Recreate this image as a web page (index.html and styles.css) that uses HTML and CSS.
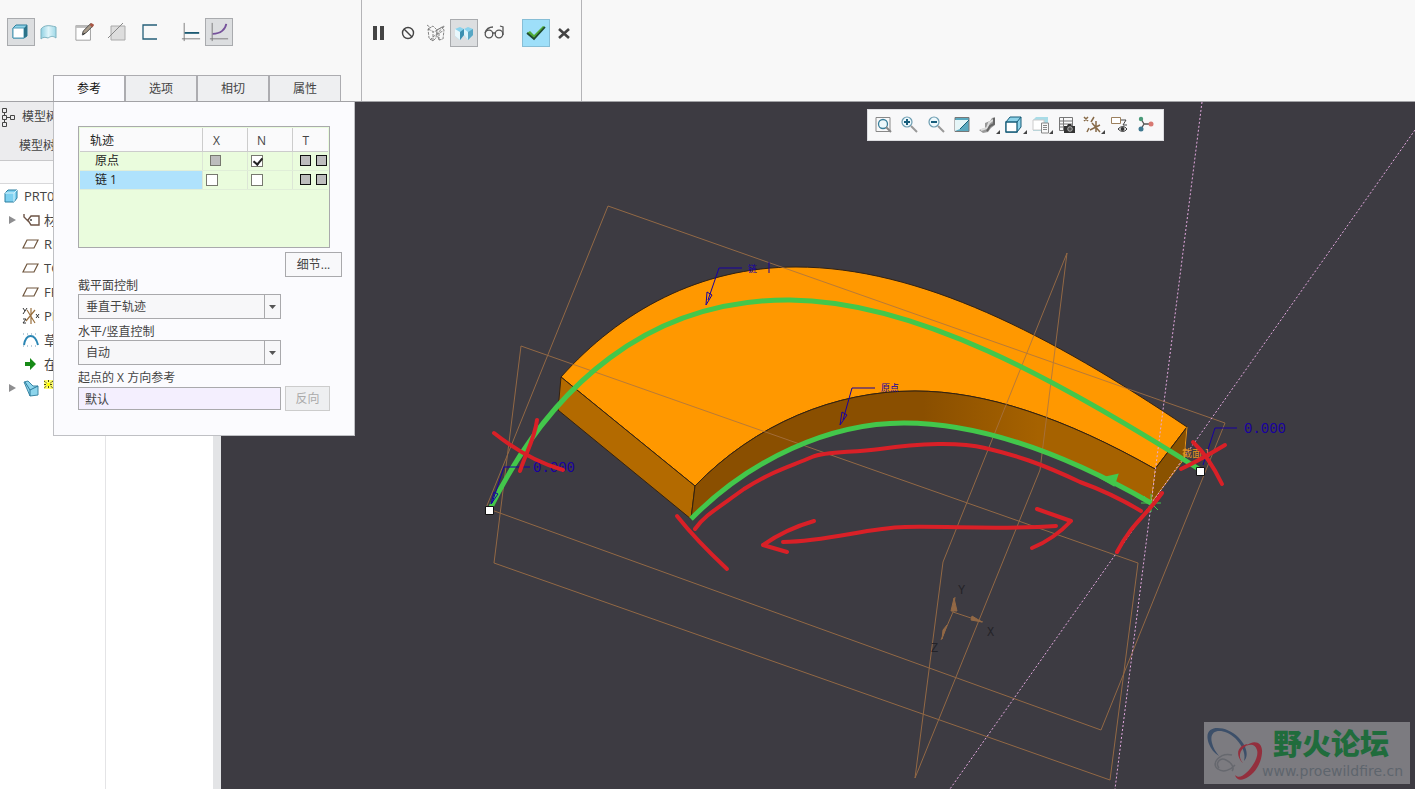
FILE: index.html
```html
<!DOCTYPE html>
<html lang="zh-CN">
<head>
<meta charset="utf-8">
<title>扫描</title>
<link rel="stylesheet" href="styles.css">
</head>
<body>
<header class="ribbon">
  <section class="ribbon-group ribbon-main">
    <div class="tools">
      <div class="tool-set">
        <button class="tool pressed" aria-label="实体"><svg viewBox="0 0 20 20"><path d="M2 6l3-3h11v11l-3 2H2z" fill="#8fd3e8" stroke="#2c7f9c"/><path d="M2 6h11v10H2z" fill="#fff" stroke="#4f9cb8"/><path d="M13 6l3-3v11l-3 2z" fill="#2c7389"/></svg></button>
        <button class="tool" aria-label="曲面"><svg viewBox="0 0 20 20"><defs><linearGradient id="sheet" x1="0" x2="1"><stop offset="0" stop-color="#8fd0e2"/><stop offset=".5" stop-color="#dff5fa"/><stop offset="1" stop-color="#9fd8e7"/></linearGradient></defs><path d="M2 7c3-4 8-4 15-2v11c-4-3-6-1-8 0-3-1-5-1-7 1z" fill="url(#sheet)" stroke="#7fb3c0"/></svg></button>
      </div>
      <div class="tool-set spaced">
        <button class="tool" aria-label="草绘"><svg viewBox="0 0 22 22"><path d="M1 4h16v16H1z" fill="#fff" stroke="#999"/><path d="M1 5h16" stroke="#bbb" stroke-width="3"/><path d="M8 14l1-4 8-8 3 2-8 8z" fill="#a99c8b" stroke="#444"/><path d="M16 3l2-2 3 2-2 3z" fill="#a85543"/><path d="M8 15l2-3 1 1z" fill="#222"/></svg></button>
        <button class="tool" aria-label="移除材料"><svg viewBox="0 0 20 20"><path d="M4 4h14v14H4z" fill="#ddd" stroke="#aaa"/><path d="M1 16L16 1" stroke="#888"/></svg></button>
        <button class="tool" aria-label="薄板"><svg viewBox="0 0 20 20"><path d="M18 3H4v14h14" fill="none" stroke="#245f78" stroke-width="1.3"/></svg></button>
      </div>
      <div class="tool-set apart">
        <button class="tool" aria-label="恒定截面"><svg viewBox="0 0 22 22"><path d="M3.500 1v20M1 18.500h20" stroke="#777"/><path d="M4 12h16" stroke="#1c5a72" stroke-width="2"/></svg></button>
        <button class="tool pressed" aria-label="可变截面"><svg viewBox="0 0 22 22"><path d="M3.500 1v20M1 18.500h20" stroke="#777"/><path d="M4 13c9 0 14-5 15-11" fill="none" stroke="#76529b" stroke-width="2"/></svg></button>
      </div>
    </div>
    <nav class="tabs">
      <button class="tab active">参考</button>
      <button class="tab">选项</button>
      <button class="tab">相切</button>
      <button class="tab">属性</button>
    </nav>
  </section>
  <section class="ribbon-group ribbon-confirm">
    <div class="tools">
      <div class="tool-set loose">
        <button class="tool" aria-label="暂停"><svg viewBox="0 0 20 20"><path d="M5 3h4v14H5zM12 3h4v14h-4z" fill="#444"/></svg></button>
        <div class="tool-set">
          <button class="tool" aria-label="无预览"><svg viewBox="0 0 20 20"><circle cx="10" cy="10" r="5.5" fill="none" stroke="#444" stroke-width="1.4"/><path d="M6 6l8 8" stroke="#444" stroke-width="1.4"/></svg></button>
          <button class="tool" aria-label="分离"><svg viewBox="0 0 20 20"><path d="M2 6l5-3 4 4-1 8-3 3-4-3zM2 6l6 3 10-6M7 18V9M11 7l5-3 2 3-1 9-4 1-2-6 6-3M1 2l4 3M4 17l15-14M13 17V9" fill="none" stroke="#555" stroke-width=".7" stroke-dasharray="3 1"/></svg></button>
          <button class="tool pressed" aria-label="附加预览"><svg viewBox="0 0 20 20"><path d="M1 6l5-2 4 2v6l-4 5-5-4z" fill="#8bd2ec"/><path d="M1 6l5 3v8l-5-4z" fill="#e8f7fc"/><path d="M6 9l4-3v6l-4 5z" fill="#3b8fb0"/><path d="M10 6l4-2 5 2v6l-5 5-4-5z" fill="#8bd2ec"/><path d="M10 6l4 3v8l-4-5z" fill="#dbf3fb"/><path d="M14 9l5-3v6l-5 5z" fill="#58a7c4"/></svg></button>
        </div>
        <button class="tool" aria-label="验证"><svg viewBox="0 0 20 20"><circle cx="5" cy="11" r="3.800" fill="none" stroke="#555" stroke-width="1.300"/><circle cx="15" cy="11" r="3.800" fill="none" stroke="#555" stroke-width="1.300"/><path d="M1 10c1-3 4-6 8-6M8 10h4M19 12V4l-3-1" fill="none" stroke="#555" stroke-width="1.300"/></svg></button>
      </div>
      <div class="tool-set apart">
        <button class="tool accept" aria-label="确定"><svg viewBox="0 0 20 20"><path d="M1 10l3-2 4 4L17 3l2 1L8 16z" fill="#4fab36"/><path d="M1 10l7 6L19 4" fill="none" stroke="#1f4a30" stroke-width="1.800"/></svg></button>
        <button class="tool" aria-label="取消"><svg viewBox="0 0 20 20"><path d="M5 6l10 9M15 6L5 15" stroke="#444" stroke-width="2.600"/></svg></button>
      </div>
    </div>
  </section>
</header>

<main class="workspace">
  <aside class="sidebar">
    <div class="tree-head">
      <div class="tree-title"><svg class="tree-logo" viewBox="0 0 16 20"><path d="M2.500 1.500h4v4h-4zM2.500 8.500h4v4h-4zM2.500 15.500h4v4h-4zM10.500 8.500h4v4h-4zM4.500 5.500v3M4.500 12.500v3M6.500 10.500h4" fill="none" stroke="#444"/></svg>模型树</div>
      <div class="tree-tab">模型树</div>
    </div>
    <div class="tree-filter"></div>
    <ul class="tree">
      <li class="root"><svg viewBox="0 0 18 18"><path d="M3 6l3-3h9v8l-3 4H3z" fill="#7dd0f0" stroke="#2d7ea0"/><path d="M3 6h9v9M12 6l3-3" fill="none" stroke="#d8f3fc"/></svg>PRT0001.PRT</li>
      <li><i class="twist"></i><svg viewBox="0 0 18 18"><path d="M6 9l3-4h8v9H9zM2 3v3l5 5" fill="none" stroke="#6d5446" stroke-width="1.400"/><circle cx="9" cy="9" r="1" fill="#444"/></svg>材料</li>
      <li><svg viewBox="0 0 18 18"><path d="M5 5h11l-4 8H1z" fill="none" stroke="#70573f" stroke-width="1.200"/></svg>RIGHT</li>
      <li><svg viewBox="0 0 18 18"><path d="M5 5h11l-4 8H1z" fill="none" stroke="#70573f" stroke-width="1.200"/></svg>TOP</li>
      <li><svg viewBox="0 0 18 18"><path d="M5 5h11l-4 8H1z" fill="none" stroke="#70573f" stroke-width="1.200"/></svg>FRONT</li>
      <li><svg viewBox="0 0 18 18"><path d="M9 1v16M4 14L13 3M5 3l8 13" stroke="#9a713f" stroke-width="1.200"/><path d="M1 1l2 3 2-3M3 4l-2 3M1 12h3l-3 4h3M14 7l3 4M17 7l-3 4" fill="none" stroke="#333"/></svg>PRT_CSYS_DEF</li>
      <li><svg viewBox="0 0 18 18"><path d="M2 14C4 2 13 2 16 14" fill="none" stroke="#2b86b4" stroke-width="2"/><path d="M1 3h16M1 15h16" stroke="#7b9cb4" stroke-dasharray="1 3"/></svg>草绘 1</li>
      <li><svg viewBox="0 0 18 18"><path d="M3 7h5V3l6 6-6 6v-4H3z" fill="#178a17"/></svg>在此插入</li>
      <li><i class="twist"></i><svg viewBox="0 0 18 18"><path d="M2 3l4-1 5 5 5 0v9l-8 1-3-7z" fill="#8dd5ec" stroke="#3b87a5"/><path d="M3 3l5 8 8-4M8 11v6" fill="none" stroke="#2b789a"/></svg><svg class="spark" viewBox="0 0 9 9"><path d="M0 1l9 7M9 1L0 8M4.500 0v9M0 4.500h9" stroke="#4d4810" stroke-dasharray="2 1"/><path d="M3 3h3v3H3z" fill="#ff0"/></svg></li>
    </ul>
  </aside>

  <section class="viewport">
    <svg class="scene" viewBox="221 102 1194 687" preserveAspectRatio="xMinYMin slice">
      <defs>
        <linearGradient id="wall" x1="0" x2="1" y1="0" y2="0"><stop offset="0" stop-color="#8a4f00"/><stop offset=".5" stop-color="#8a4f00"/><stop offset=".75" stop-color="#a66200"/><stop offset="1" stop-color="#a66200"/></linearGradient>
      </defs>
      <g class="solid-edges">
        <path d="M561 377C620 311 700 267 796 267C920 267 1050 335 1187 427L1155 469C1065 418 985 391 915 391C835 391 755 424 695 486Z" fill="#ff9800"/>
        <path d="M561 377L695 486L691 519L558 410Z" fill="#b36a00"/>
        <path d="M695 486C755 424 835 391 915 391C985 391 1065 418 1155 469L1151 503C1060 451 975 423 904 423C830 423 750 459 691 519Z" fill="url(#wall)"/>
        <path d="M1187 427L1155 469L1151 503L1184 459Z" fill="#8a5200"/>
      </g>
      <path d="M1155 469L1151 503L1184 459L1187 427" class="section-edge"/>
      <g class="datum">
        <path d="M608 206L1225 423L1101 730L486 508Z"/>
        <path d="M521 346L1138 563L1110 780L494 563Z"/>
        <path d="M1067 253L943 562L915 778L1040 470Z"/>
        <path d="M953 612L955 597M953 612L983 622M953 612L941 640"/>
        <path d="M951 611l3-13 3 13zM972 616l-1 4 11 2zM943 630l4-5-5 14z" fill="#a87446"/>
      </g>
      <path class="axis" d="M1202 102L1115 789M1415 130L950 789"/>
      <g class="track">
        <path d="M489 511C550 385 650 299 790 300C915 301 1055 378 1202 471"/>
        <path d="M691 519C750 459 830 423 904 423C975 423 1060 451 1151 503"/>
        <path d="M1106 479l9-2-2 6z" />
        <path d="M1141 503h20M1151 494v18M1144 496l14 14" class="thin"/>
      </g>
      <g class="note">
        <path d="M742 268H719L708 300M706 305l1-13 5 3zM875 388H852L843 420M840 425l2-13 5 3zM530 467H504L492 503M491 504l3-12 4 2zM1237 428H1215L1203 465"/>
        <text x="748" y="272" class="small">链</text><path d="M769 262v11"/>
        <text x="881" y="391" class="small">原点</text>
        <text x="533" y="472">0.000</text>
        <text x="1244" y="433">0.000</text>
      </g>
      <text x="1182" y="457" class="section-name">截面 1</text>
      <g class="csys"><text x="958" y="594">Y</text><text x="987" y="636">X</text><text x="931" y="652">Z</text></g>
      <g class="ends"><path d="M485.500 506.500h8v8h-8zM1196.500 467.500h8v8h-8z"/></g>
      <g class="marker">
        <path d="M494 433Q528 460 563 470M537 420C535 438 525 455 520 471"/>
        <path d="M677 516Q696 540 727 569"/>
        <path d="M695 529C704 516 715 510 744 489C775 470 786 468 812 457C826 451 850 453 880 449C920 443 960 442 985 448C1015 455 1040 463 1080 482C1105 491 1121 499 1141 511"/>
        <path d="M814 521Q786 529 763 545L787 552M783 542C830 541 866 528 905 527C950 526 1000 530 1056 526M1037 509L1071 521Q1054 539 1032 548"/>
        <path d="M1162 493C1145 517 1132 523 1117 552"/>
        <path d="M1181 469Q1200 460 1225 445M1193 442Q1209 457 1222 484"/>
      </g>
    </svg>

    <div class="view-bar">
      <button aria-label="重新调整"><svg viewBox="0 0 20 20"><path d="M3 2.500h14v14H3z" fill="none" stroke="#888"/><circle cx="10" cy="9" r="4.500" fill="#edf8fc" stroke="#397e9a" stroke-width="1.300"/><path d="M13 12l5 5" stroke="#888" stroke-width="2"/></svg></button>
      <button aria-label="放大"><svg viewBox="0 0 20 20"><circle cx="8" cy="7" r="5" fill="#edf8fc" stroke="#6d9db1" stroke-width="1.200"/><path d="M12 11l6 6" stroke="#999" stroke-width="2"/><path d="M8 4v6M5 7h6" stroke="#175d7c" stroke-width="2"/></svg></button>
      <button aria-label="缩小"><svg viewBox="0 0 20 20"><circle cx="8" cy="7" r="5" fill="#edf8fc" stroke="#6d9db1" stroke-width="1.200"/><path d="M12 11l6 6" stroke="#999" stroke-width="2"/><path d="M5 7h6" stroke="#175d7c" stroke-width="2"/></svg></button>
      <button aria-label="重画"><svg viewBox="0 0 20 20"><path d="M3 2.500h14v14H3z" fill="#5aa9bf" stroke="#777"/><path d="M3 5h14L8 14l-5 2z" fill="#e5f5f7"/><path d="M17 5L8 14" stroke="#176078"/></svg></button>
      <button class="more" aria-label="渲染"><svg viewBox="0 0 20 20"><path d="M1 15l6-2 0-5 5-2 2-3 3-1v8l-4 3-3 4-5 1z" fill="#999"/><path d="M3 15l6-2 2-5 4-3" fill="none" stroke="#ddd" stroke-width="2"/><path d="M9 16l3-5 4-2V3" fill="none" stroke="#666" stroke-width="2"/></svg></button>
      <button class="more" aria-label="显示样式"><svg viewBox="0 0 20 20"><path d="M2 7l4-5h11v10l-4 5H2z" fill="#8ed2e8" stroke="#175d79"/><path d="M2 7h11v10H2z" fill="#fff" stroke="#175d79" stroke-width="1.300"/><path d="M13 7l4-5" stroke="#175d79"/></svg></button>
      <button class="more" aria-label="已保存方向"><svg viewBox="0 0 20 20"><path d="M2 5l3-3h12v10l-4 4H2z" fill="#a9dce7"/><path d="M2 5h11v10H2z" fill="#fff" stroke="#ccc"/><path d="M10.500 8h7v10h-7z" fill="#f8f8f8" stroke="#888"/><path d="M12 10.500h4M12 12.500h4M12 14.500h4" stroke="#888"/></svg></button>
      <button aria-label="视图管理器"><svg viewBox="0 0 20 20"><path d="M2.500 2.500h13v13h-13zM2.500 6h13M2.500 9h13M2.500 12h13M6.500 2.500v13" fill="none" stroke="#777"/><path d="M7 11h3l1-2h3l1 2h3v7H7z" fill="#333"/><circle cx="13" cy="14" r="2.300" fill="#555" stroke="#ddd" stroke-width=".7"/></svg></button>
      <button class="more" aria-label="基准显示"><svg viewBox="0 0 20 20"><path d="M1 2l4 4M5 2L1 6M4 17l2-4M8 7l3-5M13 6v11M7 15l10-5M9 8l8 9" fill="none" stroke="#876a48" stroke-width="1.500"/></svg></button>
      <button aria-label="注释显示"><svg viewBox="0 0 20 20"><path d="M1.500 2.500h9v6h-9z" fill="#fff" stroke="#9c805e"/><path d="M11 5h5l-3 5h4" fill="none" stroke="#444"/><path d="M8 14q5-5 9 0-4 5-9 0z" fill="#fff" stroke="#333"/><circle cx="12.500" cy="14" r="2" fill="#333"/></svg></button>
      <button aria-label="旋转中心"><svg viewBox="0 0 20 20"><path d="M5 4l3 5-3 5M8 9h8" fill="none" stroke="#555" stroke-width="1.300"/><circle cx="5" cy="4" r="2.200" fill="#4a9a78"/><circle cx="5" cy="14" r="2.500" fill="#3e7891"/><circle cx="15" cy="9" r="2.500" fill="#d87973"/></svg></button>
    </div>

    <div class="watermark">
      <svg viewBox="0 0 60 62">
        <path d="M5 22C-3 1 22 3 34 15C43 24 45 34 40 39C42 31 38 23 31 16C20 6 4 6 8 21C9 26 12 30 15 34C10 31 7 27 5 22z" fill="#3c4f69"/>
        <path d="M42 24C50 17 59 20 58 31C57 43 49 54 40 57C36 59 32 57 31 53C34 56 38 55 42 51C49 45 55 34 53 28C51 22 47 22 42 24z" fill="#932f3d"/>
        <path d="M42 24C35 28 34 36 39 41C35 38 32 30 36 26C38 23 42 22 44 22z" fill="#932f3d"/>
        <path d="M28 33C16 30 6 42 14 47C19 51 27 48 31 43M15 46C11 41 16 35 22 38C27 40 31 46 28 49" fill="none" stroke="#66686e" stroke-width="1.500"/>
      </svg>
      <div class="watermark-text"><strong>野火论坛</strong><span>www.proewildfire.cn</span></div>
    </div>
  </section>

  <form class="panel">
    <div class="table-box">
      <table class="tracks">
        <thead><tr><th class="name">轨迹</th><th>X</th><th>N</th><th class="tan">T</th></tr></thead>
        <tbody>
          <tr><td class="name">原点</td><td><input type="checkbox" class="gray-box" disabled aria-label="原点 X"></td><td><input type="checkbox" checked aria-label="原点 N"></td><td class="tan"><input type="checkbox" class="black-box" disabled aria-label="原点 T1"><input type="checkbox" class="black-box" disabled aria-label="原点 T2"></td></tr>
          <tr><td class="name selected">链 1</td><td><input type="checkbox" aria-label="链 1 X"></td><td><input type="checkbox" aria-label="链 1 N"></td><td class="tan"><input type="checkbox" class="black-box" disabled aria-label="链 1 T1"><input type="checkbox" class="black-box" disabled aria-label="链 1 T2"></td></tr>
        </tbody>
      </table>
    </div>
    <button type="button" class="push details">细节...</button>
    <div class="field">
      <label for="plane">截平面控制</label>
      <div class="combo"><select id="plane"><option>垂直于轨迹</option></select><svg viewBox="0 0 15 23"><path d="M4 10h7l-3.500 4z" fill="#555"/></svg></div>
    </div>
    <div class="field">
      <label for="horizontal">水平/竖直控制</label>
      <div class="combo"><select id="horizontal"><option>自动</option></select><svg viewBox="0 0 15 23"><path d="M4 10h7l-3.500 4z" fill="#555"/></svg></div>
    </div>
    <div class="field">
      <label for="start">起点的 X 方向参考</label>
      <div class="field-row"><input id="start" class="collector" type="text" value="默认"><button type="button" class="push" disabled>反向</button></div>
    </div>
  </form>
</main>
</body>
</html>
```

FILE: styles.css
```css
* { box-sizing: border-box; }
body {
  margin: 0;
  height: 100vh;
  display: flex;
  flex-direction: column;
  overflow: hidden;
  background: #f8f8f8;
  color: #444;
  font: 12px/18px "Open Sans", "Noto Sans CJK SC", sans-serif;
}
button, input, select { font: inherit; color: inherit; margin: 0; padding: 0; }

/* Ribbon */
.ribbon {
  display: flex;
  flex: none;
  min-height: 102px;
  border-bottom: 1px solid #a2a2a6;
}
.ribbon-group {
  display: flex;
  flex-direction: column;
  justify-content: space-between;
  padding-top: 18px;
  border-right: 1px solid #b4b4b7;
}
.ribbon-main { width: 362px; padding-left: 7px; }
.ribbon-confirm { width: 220px; padding-left: 2px; padding-top: 19px; }
.tools, .tool-set { display: flex; }
.loose { gap: 2px; }
.spaced { margin-left: 8px; gap: 4px; }
.apart { margin-left: 14px; }
.tool {
  width: 28px;
  height: 28px;
  display: grid;
  place-items: center;
  border: 1px solid transparent;
  background: none;
}
.tool svg { width: 20px; height: 20px; }
.pressed { background: #dcdee0; border-color: #a9abae; }
.accept { background: #9edff9; border-color: #87bed6; }
.tabs { display: flex; margin-left: 46px; }
.tab {
  width: 72px;
  height: 26px;
  border: 1px solid #acacb0;
  border-bottom: 0;
  background: #eeeff1;
}
.tab.active { background: #fbfbfe; color: #111; }

/* Model tree */
.workspace { position: relative; display: flex; flex: 1; min-height: 0; }
.sidebar {
  width: 221px;
  flex: none;
  display: flex;
  flex-direction: column;
  background: #fff;
  border-right: 8px solid #e3e4e6;
  white-space: nowrap;
  overflow: hidden;
}
.tree-head { background: #ececee; height: 59px; border-bottom: 1px solid #c8c8ca; }
.tree-title { display: flex; align-items: center; height: 29px; gap: 6px; }
.tree-logo { width: 16px; height: 20px; }
.tree-tab { height: 29px; padding: 6px 0 0 19px; }
.tree-filter { height: 23px; border-bottom: 1px solid #d8d8da; background: #fafafb; }
.tree {
  flex: 1;
  width: 106px;
  margin: 0;
  padding: 0;
  list-style: none;
  border-right: 1px solid #e4e4e6;
  overflow: hidden;
}
.tree li { display: flex; align-items: center; height: 24px; padding-left: 22px; gap: 4px; position: relative; font-size: 13px; }
.tree li svg { width: 18px; height: 18px; flex: none; }
.tree li.root { padding-left: 2px; }
.tree li .spark { width: 9px; height: 9px; margin-bottom: 8px; background: #ffff6c; }
.twist {
  position: absolute;
  left: 9px;
  border-left: 7px solid #8e8e90;
  border-top: 4px solid transparent;
  border-bottom: 4px solid transparent;
}

/* Popup panel */
.panel {
  position: absolute;
  left: 53px;
  top: 0;
  width: 302px;
  padding: 24px 12px 24px 24px;
  display: flex;
  flex-direction: column;
  background: #fbfbfe;
  border: 1px solid #bfc0c4;
  border-top: 0;
}
.table-box {
  width: 252px;
  height: 122px;
  padding: 1px;
  border: 1px solid #a9a9ac;
  background: #eafcdd;
}
.tracks { width: 100%; border-collapse: collapse; table-layout: fixed; }
.tracks tr { height: 19px; }
.tracks thead tr { height: 23px; background: #fafafb; }
.tracks th, .tracks td { width: 45px; padding: 0; font-weight: normal; border-right: 1px solid #dce6d6; border-bottom: 1px solid #e0eed8; }
.tracks th { border-color: #ccc; padding: 4px 16px 0 0; }
.tracks .name { width: 122px; text-align: left; padding-left: 15px; color: #222; }
.tracks th.name { padding-left: 10px; }
.tracks .tan { width: auto; border-right: 0; padding-left: 7px; white-space: nowrap; font-size: 0; text-align: left; }
.tracks th.tan { font-size: 12px; padding-left: 10px; }
.tracks td { line-height: 18px; padding-left: 3px; font-size: 12px; }
.tracks .selected { background: #afe2fc; }
.tracks input {
  appearance: none;
  display: block;
  width: 12px;
  height: 12px;
  background: #fff;
  border: 1px solid #77786f;
}
.tracks input:checked::after {
  content: "";
  display: block;
  width: 4px;
  height: 7px;
  margin: 0 0 0 3px;
  border: solid #222;
  border-width: 0 2px 2px 0;
  transform: rotate(40deg);
}
.tracks .gray-box { background: #bdbdbd; width: 11px; height: 11px; margin-left: 4px; }
.tracks .black-box { display: inline-block; vertical-align: middle; width: 11px; height: 11px; background: #bdbdbd; border-color: #111; }
.black-box + .black-box { margin-left: 5px; }
.push {
  width: 45px;
  height: 25px;
  border: 1px solid #a9a9ac;
  background: #f8f8fa;
}
.push:disabled { color: #aaa; border-color: #ccc; background: #eeeff1; }
.details { width: 57px; align-self: flex-end; margin: 4px 0 0; }
.field { display: flex; flex-direction: column; }
.field label { height: 21px; padding-top: 4px; line-height: 17px; }
.details + .field { margin-top: -4px; }
.combo { display: grid; width: 203px; height: 25px; }
.combo select, .combo svg { grid-area: 1 / 1; }
.combo select { appearance: none; padding: 0 24px 0 7px; border: 1px solid #a9a9ac; border-radius: 0; background: #f7f7f9; }
.combo svg { justify-self: end; width: 16px; height: 23px; margin: 1px 1px 0 0; border-left: 1px solid #a9a9ac; pointer-events: none; }
.field-row { display: flex; align-items: center; gap: 4px; }
.collector { width: 203px; height: 23px; padding: 0 6px; border: 1px solid #a9a9ac; background: #f4effe; }

/* Graphics area */
.viewport { position: relative; flex: 1; min-width: 0; background: #3d3b42; overflow: hidden; }
.scene { display: block; width: 100%; height: 100%; fill: none; }
.solid-edges { stroke: #332211; stroke-width: 1; }
.section-edge { stroke: #e9971e; }
.datum { stroke: #a87446; stroke-width: 1; opacity: .8; }
.axis { stroke: #e3a8df; stroke-dasharray: 2 2; }
.track { stroke: #43c74b; stroke-width: 5; }
.track .thin { stroke-width: 1; }
.note { stroke: #1800a0; stroke-width: 1; }
.note text { fill: #1800a0; stroke: none; font: 14px "Liberation Mono", monospace; }
.note .small { font: 9px "Noto Sans CJK SC", sans-serif; }
.section-name { fill: #e5931f; font: 10px "Noto Sans CJK SC", sans-serif; }
.csys { fill: #242328; font: 12px "Liberation Mono", monospace; }
.ends { fill: #fff; stroke: #111; }
.marker { stroke: #d92027; stroke-width: 4; stroke-linecap: round; stroke-linejoin: round; }
.view-bar {
  position: absolute;
  right: 251px;
  top: 7px;
  width: 297px;
  height: 32px;
  padding: 0 4px 0 2px;
  display: flex;
  background: #f8f8f9;
  border: 1px solid #dcdce0;
}
.view-bar button { flex: 1; display: grid; place-items: center; border: 0; background: none; position: relative; }
.view-bar svg { width: 20px; height: 20px; }
.more::after {
  content: "";
  position: absolute;
  right: 1px;
  bottom: 6px;
  border-left: 4px solid transparent;
  border-bottom: 4px solid #444;
}
.watermark {
  position: absolute;
  right: 5px;
  bottom: 5px;
  width: 206px;
  height: 62px;
  display: flex;
  background: #7c7b80;
  overflow: hidden;
}
.watermark svg { width: 60px; height: 62px; flex: none; }
.watermark-text { display: flex; flex-direction: column; white-space: nowrap; }
.watermark strong { padding-left: 9px; font: 900 29px/40px "Noto Sans CJK SC", sans-serif; color: #206c3c; }
.watermark span { margin-left: -2px; font: 14px/18px "DejaVu Sans", sans-serif; color: #5e656d; }
```
